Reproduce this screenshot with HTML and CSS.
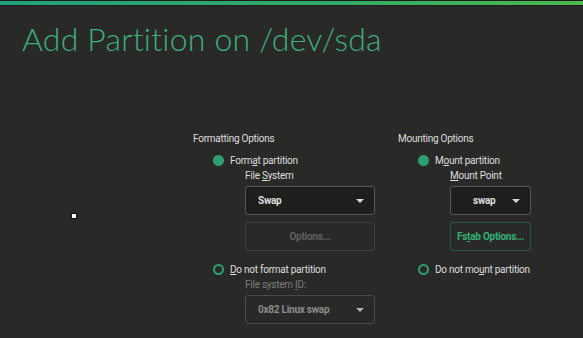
FILE: index.html
```html
<!DOCTYPE html>
<html lang="en">
<head>
    <meta charset="UTF-8">
    <title>Add Partition</title>
    <link rel="stylesheet" href="styles.css">
</head>
<body>
    <div class="top-bar"></div>
    <h1 class="page-title">Add Partition on /dev/sda</h1>

    <div class="cursor-dot"></div>

    <div class="options">
        <div class="column">
            <div class="group-title">Formatting Options</div>
            <div class="radio-row">
                <span class="radio checked"></span>
                <span>Form<u>a</u>t partition</span>
            </div>
            <div class="sub">
                <div class="field-label">File <u>S</u>ystem</div>
                <div class="combo combo-wide">
                    <span>Swap</span>
                    <span class="arrow"></span>
                </div>
                <div class="button button-wide disabled">Options...</div>
            </div>
            <div class="radio-row second">
                <span class="radio"></span>
                <span><u>D</u>o not format partition</span>
            </div>
            <div class="sub">
                <div class="field-label disabled-text">File system <u>I</u>D:</div>
                <div class="combo combo-wide disabled">
                    <span>0x82 Linux swap</span>
                    <span class="arrow"></span>
                </div>
            </div>
        </div>

        <div class="column">
            <div class="group-title">Mounting Options</div>
            <div class="radio-row">
                <span class="radio checked"></span>
                <span>M<u>o</u>unt partition</span>
            </div>
            <div class="sub">
                <div class="field-label"><u>M</u>ount Point</div>
                <div class="combo combo-narrow">
                    <span>swap</span>
                    <span class="arrow"></span>
                </div>
                <div class="button button-narrow accent">Fs<u>t</u>ab Options...</div>
            </div>
            <div class="radio-row second">
                <span class="radio"></span>
                <span>Do not mo<u>u</u>nt partition</span>
            </div>
        </div>
    </div>
</body>
</html>
```

FILE: styles.css
```css
* {
    box-sizing: border-box;
}

body {
    margin: 0;
    background: #292a28;
    color: #dedede;
    font-family: Roboto, "Liberation Sans", sans-serif;
    width: 583px;
    height: 338px;
    overflow: hidden;
    position: relative;
}

.top-bar {
    height: 6px;
    border-top: 1px solid #1c1d1b;
    background: linear-gradient(90deg, #21a07a, #35ac66 60%, #4db84e);
    border-bottom: 1px solid #1c1d1b;
}

.page-title {
    margin: 14px 0 0 22px;
    font-family: Lato, "Open Sans", sans-serif;
    font-weight: 300;
    font-size: 32px;
    line-height: 38px;
    color: #3fae7e;
    letter-spacing: 0.2px;
}

.cursor-dot {
    position: absolute;
    left: 71px;
    top: 213px;
    width: 6px;
    height: 6px;
    background: #ffffff;
    border: 1px solid #111;
}

.options {
    display: grid;
    grid-template-columns: 205px 160px;
    margin: 75px 0 0 193px;
}

.column {
    font-size: 10px;
    letter-spacing: -0.25px;
}

.group-title {
    height: 12px;
    line-height: 12px;
}

.radio-row {
    display: flex;
    align-items: center;
    gap: 6px;
    margin: 9px 0 0 20px;
    height: 12px;
}

.radio-row.second {
    margin-top: 12px;
}

.radio {
    width: 11px;
    height: 11px;
    border-radius: 50%;
    border: 2px solid #2ea070;
}

.radio.checked {
    background: #2ea070;
}

.sub {
    padding-left: 52px;
}

.field-label {
    height: 13px;
    line-height: 13px;
    margin-top: 3px;
}

.disabled-text {
    color: #7b7c7a;
}

.combo {
    margin-top: 4px;
    height: 29px;
    display: flex;
    align-items: center;
    justify-content: space-between;
    padding: 0 10px 0 12px;
    background: #1e1f1d;
    border: 1px solid #575856;
    border-radius: 3px;
    font-weight: 700;
}

.combo.disabled {
    background: transparent;
    border-color: #4a4b49;
    color: #8b8c8a;
}

.combo-wide {
    width: 130px;
}

.combo-narrow {
    width: 81px;
    padding-left: 22px;
}

.arrow {
    width: 0;
    height: 0;
    border-left: 4px solid transparent;
    border-right: 4px solid transparent;
    border-top: 4px solid #d8d8d8;
}

.combo.disabled .arrow {
    border-top-color: #b0b0b0;
}

.button {
    margin-top: 7px;
    height: 29px;
    display: flex;
    align-items: center;
    justify-content: center;
    border: 1px solid #3f403e;
    border-radius: 3px;
    font-weight: 700;
}

.button.disabled {
    color: #5f605e;
}

.button.accent {
    color: #35b075;
    border-color: #265a43;
}

.button-wide {
    width: 130px;
}

.button-narrow {
    width: 81px;
}
```
